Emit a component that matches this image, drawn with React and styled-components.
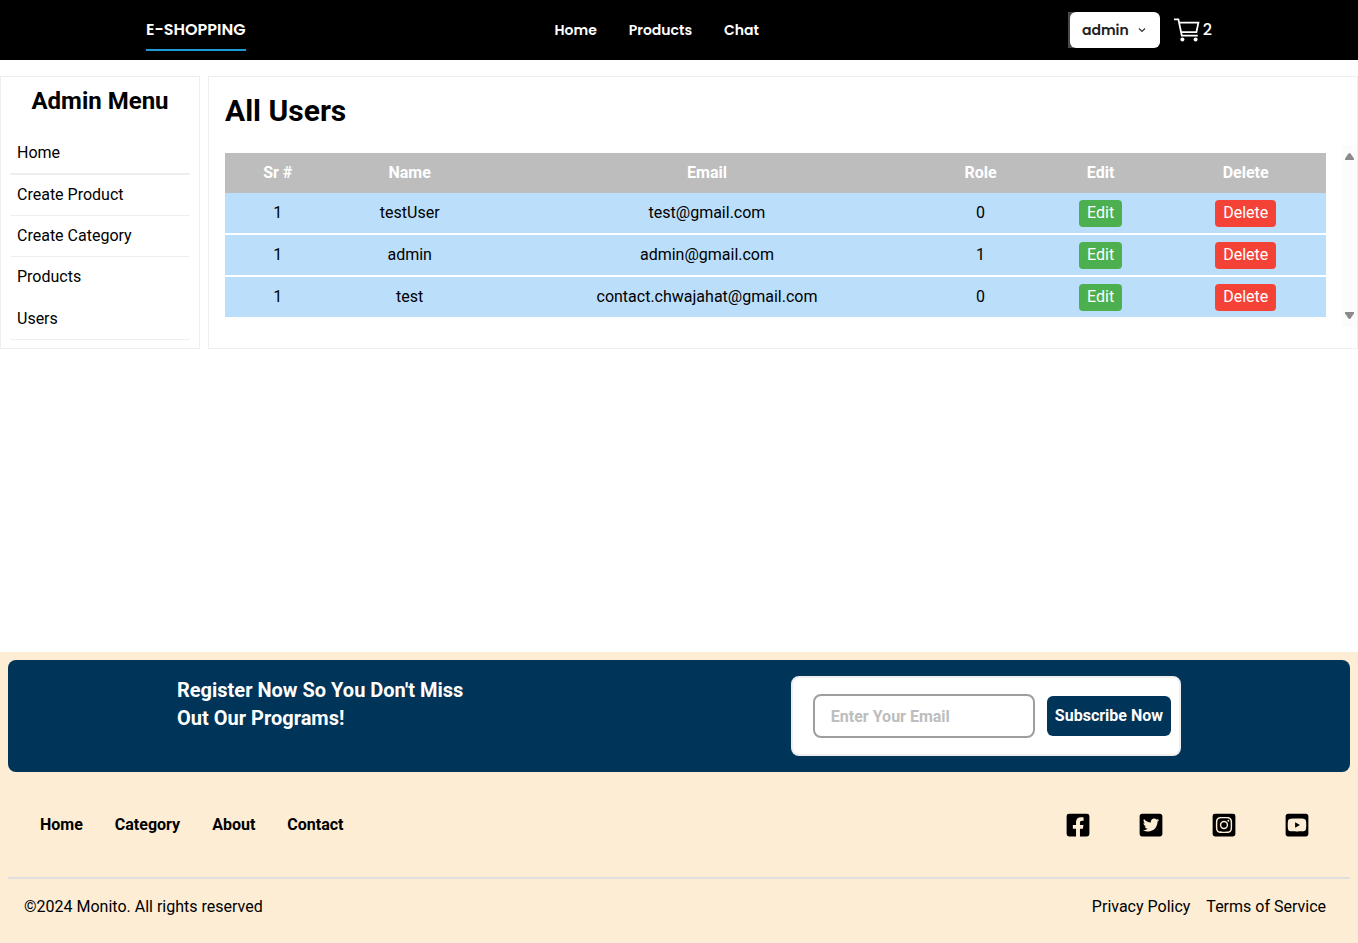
import React from 'react';
import styled, { createGlobalStyle } from 'styled-components';
import { FaFacebookSquare, FaTwitterSquare, FaInstagramSquare, FaYoutubeSquare } from 'react-icons/fa';

const GlobalStyle = createGlobalStyle`
  *, *::before, *::after { box-sizing: border-box; }
  body {
    margin: 0;
    background: #fff;
    color: #000;
    font: 400 16px/24px Roboto, "Liberation Sans", sans-serif;
  }
  h1, h2, p { margin: 0; padding: 0; }
  a { color: inherit; text-decoration: none; }
  button, input { font: inherit; }
`;

const Page = styled.div`
  min-height: 100vh;
  display: flex;
  flex-direction: column;
`;

const Header = styled.header`
  height: 60px;
  padding: 0 146px;
  background: #000;
  color: #fff;
  display: flex;
  align-items: center;
  justify-content: space-between;
  font-family: Poppins, Inter, sans-serif;
`;

const Brand = styled.a`
  padding: 16px 0 7px;
  border-bottom: 2px solid #1e9bd7;
  margin-bottom: 7px;
  font-size: 16px;
  font-weight: 600;
`;

const HeaderNav = styled.nav`
  display: flex;
  gap: 32px;
  font-size: 14px;
  font-weight: 600;
`;

const Account = styled.div`
  display: flex;
  align-items: center;
  gap: 14px;
`;

const AccountFrame = styled.div`
  padding-left: 2px;
  border-radius: 0 6px 6px 0;
  background: linear-gradient(to right, #4a4a4a 6px, #000 6px);
`;

const AccountButton = styled.button`
  height: 36px;
  padding: 0 12px;
  border: 0;
  border-radius: 6px;
  background: #fff;
  color: #212121;
  display: flex;
  align-items: center;
  gap: 7px;
  font-size: 14px;
  font-weight: 600;
`;

const CartLink = styled.a`
  display: flex;
  align-items: center;
  gap: 3px;
  font-size: 16px;
  font-weight: 500;
`;

const Main = styled.main`
  flex: 1;
  padding-top: 16px;
  display: flex;
  align-items: flex-start;
`;

const Columns = styled.div`
  flex: 1;
  display: flex;
  gap: 8px;
`;

const Sidebar = styled.aside`
  flex: 0 0 200px;
  padding: 8px 9px;
  border: 1px solid #eee;
`;

const SidebarTitle = styled.h2`
  margin-bottom: 16px;
  text-align: center;
  font-size: 24px;
  line-height: 32px;
  font-weight: 700;
`;

const SidebarItem = styled.a`
  display: block;
  padding: 8px 7px;
  border-bottom: ${(p) => (p.$thick ? 2 : 1)}px solid ${(p) => (p.$plain ? 'transparent' : '#eee')};
  border-radius: 2px;
`;

const Panel = styled.section`
  flex: 1;
  min-width: 0;
  padding: 16px 0 20px 16px;
  border: 1px solid #eee;
`;

const PanelTitle = styled.h1`
  margin-bottom: 16px;
  font-size: 30px;
  line-height: 36px;
  font-weight: 700;
`;

const TableArea = styled.div`
  display: flex;
  gap: 16px;
`;

const TableWrap = styled.div`
  flex: 1;
  padding: 8px 0 10px;
`;

const Table = styled.table`
  width: 100%;
  border-collapse: separate;
  border-spacing: 0;
  text-align: center;
`;

const HeadCell = styled.th`
  height: 40px;
  padding: 0 16px;
  background: #bdbdbd;
  color: #fff;
  font-weight: 700;
`;

const Cell = styled.td`
  box-sizing: content-box;
  height: 40px;
  padding: 0 16px;
  background: #bbdefb;
`;

const Row = styled.tr`
  & + & > td { border-top: 2px solid #fff; }
`;

const ActionButton = styled.button`
  display: block;
  margin: 0 auto;
  height: 27px;
  padding: 0 8px;
  border: 0;
  border-radius: 4px;
  background: ${(p) => (p.$danger ? '#f44336' : '#4caf50')};
  color: #fff;
`;

const ScrollTrack = styled.div`
  width: 15px;
  padding: 8px 0;
  background: #fcfcfc;
  display: flex;
  flex-direction: column;
  align-items: center;
  justify-content: space-between;
`;

const Footer = styled.footer`
  padding: 8px;
  background: #fcedd4;
`;

const Register = styled.section`
  min-height: 112px;
  padding: 16px 169px;
  border-radius: 8px;
  background: #003459;
  display: flex;
  align-items: flex-start;
  justify-content: space-between;
`;

const RegisterTitle = styled.h2`
  max-width: 300px;
  color: #fff;
  font-size: 20px;
  line-height: 28px;
  font-weight: 700;
`;

const SubscribeForm = styled.form`
  padding: 16px 8px 16px 20px;
  border: 2px solid #eee;
  border-radius: 8px;
  background: #fff;
  display: flex;
  align-items: center;
  gap: 12px;
`;

const EmailInput = styled.input`
  width: 222px;
  height: 44px;
  padding: 0 16px;
  border: 2px solid #9e9e9e;
  border-radius: 8px;
  font-weight: 700;
  &::placeholder { color: #bdbdbd; opacity: 1; }
`;

const SubscribeButton = styled.button`
  height: 40px;
  padding: 0 8px;
  border: 0;
  border-radius: 6px;
  background: #003459;
  color: #fff;
  font-weight: 700;
`;

const FooterLinks = styled.div`
  box-sizing: content-box;
  height: 105px;
  padding: 0 40px 0 32px;
  border-bottom: 2px solid #e0e0e0;
  display: flex;
  align-items: center;
  justify-content: space-between;
`;

const FooterNav = styled.nav`
  display: flex;
  gap: 32px;
  font-weight: 700;
`;

const Social = styled.div`
  display: flex;
  gap: 47px;
  a { display: flex; }
`;

const Legal = styled.div`
  padding: 16px 16px 16px;
  display: flex;
  justify-content: space-between;
`;

const LegalLinks = styled.nav`
  padding-right: 8px;
  display: flex;
  gap: 16px;
`;

const menu = [
  { label: 'Home', thick: true },
  { label: 'Create Product' },
  { label: 'Create Category' },
  { label: 'Products', thick: true, plain: true },
  { label: 'Users' },
];

const users = [
  { name: 'testUser', email: 'test@gmail.com', role: 0 },
  { name: 'admin', email: 'admin@gmail.com', role: 1 },
  { name: 'test', email: 'contact.chwajahat@gmail.com', role: 0 },
];

const socials = [
  ['Facebook', FaFacebookSquare],
  ['Twitter', FaTwitterSquare],
  ['Instagram', FaInstagramSquare],
  ['YouTube', FaYoutubeSquare],
];

const ChevronIcon = () => (
  <svg width="12" height="12" viewBox="0 0 12 12" fill="none" stroke="#333" strokeWidth="1.2" aria-hidden="true">
    <path d="M3 4.5 6 7.5 9 4.5" />
  </svg>
);

const CartIcon = () => (
  <svg width="26" height="26" viewBox="0 0 26 26" fill="none" stroke="#fff" strokeWidth="1.8" aria-hidden="true">
    <path d="M0 2.3h4.4l3.4 16.4h16M5.1 5.6h19.3l-2 9.6H7.2" />
    <circle cx="8.4" cy="22.6" r="2" fill="#fff" stroke="none" />
    <circle cx="21.6" cy="22.6" r="2" fill="#fff" stroke="none" />
  </svg>
);

const ArrowIcon = ({ down }) => (
  <svg width="9" height="7" viewBox="0 0 9 7" fill="#8b8b8b" aria-hidden="true">
    <path d={down ? 'M0 0h9v1.5L5.5 6.5q-1 1-2 0L0 1.5z' : 'M0 7h9V5.5L5.5.5q-1-1-2 0L0 5.5z'} />
  </svg>
);

export default function App() {
  return (
    <Page>
      <GlobalStyle />
      <Header>
        <Brand href="#">E-SHOPPING</Brand>
        <HeaderNav>
          <a href="#home">Home</a>
          <a href="#products">Products</a>
          <a href="#chat">Chat</a>
        </HeaderNav>
        <Account>
          <AccountFrame>
            <AccountButton type="button">admin <ChevronIcon /></AccountButton>
          </AccountFrame>
          <CartLink href="#cart"><CartIcon />2</CartLink>
        </Account>
      </Header>
      <Main>
        <Columns>
          <Sidebar>
            <SidebarTitle>Admin Menu</SidebarTitle>
            <nav>
              {menu.map((m) => (
                <SidebarItem key={m.label} href="#admin" $thick={m.thick} $plain={m.plain}>{m.label}</SidebarItem>
              ))}
            </nav>
          </Sidebar>
          <Panel>
            <PanelTitle>All Users</PanelTitle>
            <TableArea>
              <TableWrap>
                <Table>
                  <thead>
                    <tr>
                      {['Sr #', 'Name', 'Email', 'Role', 'Edit', 'Delete'].map((h) => <HeadCell key={h} scope="col">{h}</HeadCell>)}
                    </tr>
                  </thead>
                  <tbody>
                    {users.map((u) => (
                      <Row key={u.email}>
                        <Cell>1</Cell>
                        <Cell>{u.name}</Cell>
                        <Cell>{u.email}</Cell>
                        <Cell>{u.role}</Cell>
                        <Cell><ActionButton type="button">Edit</ActionButton></Cell>
                        <Cell><ActionButton type="button" $danger>Delete</ActionButton></Cell>
                      </Row>
                    ))}
                  </tbody>
                </Table>
              </TableWrap>
              <ScrollTrack>
                <ArrowIcon />
                <ArrowIcon down />
              </ScrollTrack>
            </TableArea>
          </Panel>
        </Columns>
      </Main>
      <Footer>
        <Register>
          <RegisterTitle>Register Now So You Don't Miss Out Our Programs!</RegisterTitle>
          <SubscribeForm>
            <EmailInput type="email" placeholder="Enter Your Email" aria-label="Enter Your Email" />
            <SubscribeButton type="button">Subscribe Now</SubscribeButton>
          </SubscribeForm>
        </Register>
        <FooterLinks>
          <FooterNav>
            <a href="#home">Home</a>
            <a href="#category">Category</a>
            <a href="#about">About</a>
            <a href="#contact">Contact</a>
          </FooterNav>
          <Social>
            {socials.map(([label, Icon]) => (
              <a key={label} href="#social" aria-label={label}><Icon size={26} /></a>
            ))}
          </Social>
        </FooterLinks>
        <Legal>
          <p>©2024 Monito. All rights reserved</p>
          <LegalLinks>
            <a href="#privacy">Privacy Policy</a>
            <a href="#terms">Terms of Service</a>
          </LegalLinks>
        </Legal>
      </Footer>
    </Page>
  );
}
